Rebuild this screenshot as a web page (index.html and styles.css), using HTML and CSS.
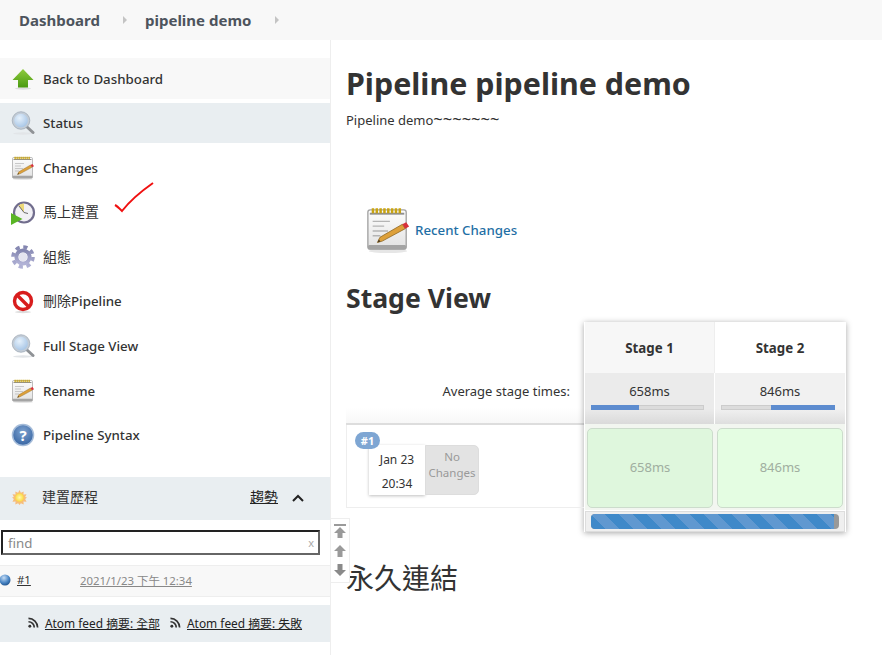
FILE: index.html
```html
<!DOCTYPE html>
<html lang="en">

<head>
    <meta charset="UTF-8">
    <meta name="viewport" content="width=device-width, initial-scale=1.0">
    <title>pipeline demo</title>
    <link rel="stylesheet" href="styles.css">
</head>

<body>
    <svg class="defs" width="0" height="0">
        <defs>
            <radialGradient id="lens" cx="40%" cy="35%" r="70%">
                <stop offset="0" stop-color="#e6f1fb" />
                <stop offset="1" stop-color="#9fc0e4" />
            </radialGradient>
            <linearGradient id="paper" x1="0" y1="0" x2="0" y2="1">
                <stop offset="0" stop-color="#fdfdfd" />
                <stop offset="1" stop-color="#e2e2e2" />
            </linearGradient>
            <linearGradient id="arrow-green" x1="0" y1="0" x2="0" y2="1">
                <stop offset="0" stop-color="#8fcb3e" />
                <stop offset="1" stop-color="#4a9a10" />
            </linearGradient>
            <linearGradient id="gear" x1="0" y1="0" x2="0" y2="1">
                <stop offset="0" stop-color="#8486b0" />
                <stop offset="1" stop-color="#b1b2d6" />
            </linearGradient>
            <radialGradient id="help-blue" cx="50%" cy="35%" r="70%">
                <stop offset="0" stop-color="#7fa3d0" />
                <stop offset="1" stop-color="#31609f" />
            </radialGradient>
            <radialGradient id="ball" cx="40%" cy="30%" r="75%">
                <stop offset="0" stop-color="#c5dcf4" />
                <stop offset=".6" stop-color="#4a86c5" />
                <stop offset="1" stop-color="#1d4f8a" />
            </radialGradient>
            <radialGradient id="sun" cx="50%" cy="50%" r="50%">
                <stop offset="0" stop-color="#fffbb0" />
                <stop offset="1" stop-color="#fbd93f" />
            </radialGradient>
            <symbol id="icon-search" viewBox="0 0 24 24">
                <ellipse cx="12" cy="22.500" rx="10" ry="1.200" fill="#e2e5e8" />
                <path d="M15.500 15.500l6.500 6" stroke="#8f9296" stroke-width="3" stroke-linecap="round" />
                <circle cx="10" cy="9.500" r="7.800" fill="url(#lens)" stroke="#c3ccd6" stroke-width="2" />
                <circle cx="10" cy="9.500" r="8.800" fill="none" stroke="#8e9cab" stroke-width=".6" />
            </symbol>
            <symbol id="icon-notepad" viewBox="0 0 24 24">
                <ellipse cx="12" cy="23" rx="10" ry="1" fill="#e6e6e6" />
                <rect x="1.500" y="1.500" width="20" height="20.500" rx="1.200" fill="url(#paper)" stroke="#a2a2a2" stroke-width=".7" />
                <rect x="1.500" y="19.800" width="20" height="2.400" rx=".8" fill="#a4a4a4" />
                <rect x="2.500" y="3" width="18" height="1" fill="#8f8f8f" />
                <path d="M3.500 2h16" stroke="#c9a411" stroke-width="2.600" stroke-dasharray="1.300 .7" />
                <path d="M4 7.500h9M4 10h6M4 12.500h8M4 15h4" stroke="#b4b4b4" stroke-width=".7" />
                <path d="M6.500 18.500l1.300-2.700L19.500 9l1.500 2.300L9 17.800z" fill="#dda03a" stroke="#8a6420" stroke-width=".4" />
                <path d="M6.500 18.500l.7-1.500.9 1z" fill="#4a3a20" />
                <path d="M19.500 9l2-1 1.500 2.200-2 1.100z" fill="#d8303a" />
            </symbol>
        </defs>
    </svg>

    <header class="breadcrumbs">
        <a href="#">Dashboard</a>
        <span class="crumb-arrow"></span>
        <a href="#">pipeline demo</a>
        <span class="crumb-arrow crumb-arrow-last"></span>
    </header>

    <div class="page">
        <aside class="sidebar">
            <ul class="tasks">
                <li class="task task-back">
                    <svg class="task-icon" viewBox="0 0 24 24">
                        <ellipse cx="12" cy="21.500" rx="8" ry="1.200" fill="#ddd" />
                        <path d="M12 2L22.500 13H17V20.500H7V13H1.500z" fill="url(#arrow-green)" />
                    </svg>
                    <a href="#">Back to Dashboard</a>
                </li>
                <li class="task task-active">
                    <svg class="task-icon"><use href="#icon-search" /></svg>
                    <a href="#">Status</a>
                </li>
                <li class="task">
                    <svg class="task-icon"><use href="#icon-notepad" /></svg>
                    <a href="#">Changes</a>
                </li>
                <li class="task">
                    <svg class="task-icon" viewBox="0 0 24 24">
                        <circle cx="13" cy="11.500" r="10" fill="#f1f0f5" stroke="#716d8d" stroke-width="2.200" />
                        <path d="M13 11.500L7.500 4.500A9 9 0 0 1 13 2.500z" fill="#ecd877" />
                        <path d="M13 11.500L8 5M13 11.500l4 1" stroke="#6a6a6a" stroke-width="1" />
                        <path d="M0 12l11.500 6L0 24z" fill="#59b525" />
                    </svg>
                    <a class="task-link-cjk cjk" href="#">馬上建置</a>
                    <svg class="check-mark" viewBox="0 0 40 34">
                        <path d="M1 23c2 1 4 3 7 6C15 20 29 8 39 1" fill="none" stroke="#f01010" stroke-width="2" />
                    </svg>
                </li>
                <li class="task">
                    <svg class="task-icon" viewBox="0 0 24 24">
                        <circle cx="12" cy="12" r="10" fill="none" stroke="url(#gear)" stroke-width="3.600" stroke-dasharray="4.200 3.650" />
                        <circle cx="12" cy="12" r="6.600" fill="none" stroke="url(#gear)" stroke-width="4" />
                        <circle cx="12" cy="12" r="4.200" fill="#e4e4ef" />
                    </svg>
                    <a class="task-link-cjk cjk" href="#">組態</a>
                </li>
                <li class="task">
                    <svg class="task-icon" viewBox="0 0 24 24">
                        <ellipse cx="12" cy="22" rx="8" ry="1.200" fill="#ddd" />
                        <circle cx="12" cy="11" r="8.500" fill="#fff" stroke="#d81d1d" stroke-width="3.400" />
                        <path d="M6 5l12 12" stroke="#d81d1d" stroke-width="3.400" />
                    </svg>
                    <a class="task-link-cjk" href="#"><span class="cjk">刪除</span>Pipeline</a>
                </li>
                <li class="task">
                    <svg class="task-icon"><use href="#icon-search" /></svg>
                    <a href="#">Full Stage View</a>
                </li>
                <li class="task">
                    <svg class="task-icon"><use href="#icon-notepad" /></svg>
                    <a href="#">Rename</a>
                </li>
                <li class="task">
                    <svg class="task-icon" viewBox="0 0 24 24">
                        <circle cx="12" cy="12" r="10.500" fill="url(#help-blue)" stroke="#a5bcd9" stroke-width="1.500" />
                        <text class="help-mark" x="12" y="17.500" text-anchor="middle">?</text>
                    </svg>
                    <a href="#">Pipeline Syntax</a>
                </li>
            </ul>

            <section class="history">
                <div class="history-head">
                    <svg class="sun-icon" viewBox="0 0 16 16">
                        <path d="M8 0l1.500 3 3-1.500-.3 3.300 3.300-.3L14 7.500l2 .5-2 1.500 1.500 3-3.300-.3.3 3.300-3-1.500L8 16l-1.500-2-3 1.500.3-3.300-3.300.3L2 9.500 0 8l2-.5L.500 4.500l3.300.3-.3-3.300 3 1.500z" fill="#f7bd7a" />
                        <circle cx="8" cy="8" r="4.600" fill="url(#sun)" />
                    </svg>
                    <span class="history-title">建置歷程</span>
                    <a class="trend" href="#">趨勢</a>
                    <svg class="collapse" viewBox="0 0 12 8">
                        <path d="M1 7l5-5 5 5" fill="none" stroke="#222" stroke-width="2" />
                    </svg>
                </div>
                <div class="find-wrap">
                    <div class="find-box">
                        <span>find</span>
                        <span class="find-clear">x</span>
                    </div>
                </div>
                <div class="build-row">
                    <svg class="ball" viewBox="0 0 12 12"><circle cx="6" cy="6" r="5.500" fill="url(#ball)" /></svg>
                    <a class="build-no" href="#">#1</a>
                    <a class="build-date" href="#">2021/1/23 下午 12:34</a>
                </div>
                <div class="feeds">
                    <svg class="rss" viewBox="0 0 12 12">
                        <circle cx="2" cy="10" r="1.600" fill="#333" />
                        <path d="M.500 5.200a6.300 6.300 0 0 1 6.300 6.300M.500 1.500a10 10 0 0 1 10 10" fill="none" stroke="#333" stroke-width="1.800" />
                    </svg>
                    <a href="#">Atom feed 摘要: 全部</a>
                    <svg class="rss rss-second" viewBox="0 0 12 12">
                        <circle cx="2" cy="10" r="1.600" fill="#333" />
                        <path d="M.500 5.200a6.300 6.300 0 0 1 6.300 6.300M.500 1.500a10 10 0 0 1 10 10" fill="none" stroke="#333" stroke-width="1.800" />
                    </svg>
                    <a href="#">Atom feed 摘要: 失敗</a>
                </div>
            </section>
        </aside>

        <main class="content">
            <h1>Pipeline pipeline demo</h1>
            <p class="description">Pipeline demo<span class="tildes">~~~~~~~</span></p>

            <div class="recent">
                <svg class="recent-icon"><use href="#icon-notepad" /></svg>
                <a href="#">Recent Changes</a>
            </div>

            <h2 class="stage-title">Stage View</h2>

            <div class="stage-view">
                <div class="stage-left">
                    <div class="avg-label">Average stage times:</div>
                    <div class="run-row">
                        <span class="run-badge">#1</span>
                        <div class="run-date">
                            <span>Jan 23</span>
                            <span>20:34</span>
                        </div>
                        <div class="run-changes">No Changes</div>
                    </div>
                </div>
                <div class="stage-card">
                    <div class="stage-col stage-col-odd">
                        <div class="stage-name">Stage 1</div>
                        <div class="stage-avg">
                            <span>658ms</span>
                            <div class="avg-track"><div class="avg-fill" style="width: 43%"></div></div>
                        </div>
                        <div class="stage-cell-wrap">
                            <div class="stage-cell">658ms</div>
                        </div>
                    </div>
                    <div class="stage-col">
                        <div class="stage-name">Stage 2</div>
                        <div class="stage-avg">
                            <span>846ms</span>
                            <div class="avg-track"><div class="avg-fill avg-fill-right" style="width: 57%"></div></div>
                        </div>
                        <div class="stage-cell-wrap">
                            <div class="stage-cell stage-cell-light">846ms</div>
                        </div>
                    </div>
                    <div class="progress-row">
                        <div class="progress-bar"><div class="progress-fill"></div></div>
                    </div>
                </div>
            </div>

            <h2 class="permalinks">永久連結</h2>
        </main>
    </div>

    <div class="scroll-btns">
        <svg viewBox="0 0 12 14"><path d="M0 0h12v2H0zM6 3l6 6H8.500v5h-5V9H0z" fill="#9a9a9a" /></svg>
        <svg viewBox="0 0 12 12"><path d="M6 0l6 6H8.500v6h-5V6H0z" fill="#9a9a9a" /></svg>
        <svg viewBox="0 0 12 12"><path d="M6 12l6-6H8.500V0h-5v6H0z" fill="#8a8a8a" /></svg>
    </div>
</body>

</html>
```

FILE: styles.css
```css
* {
    box-sizing: border-box;
}

html,
body {
    height: 655px;
    overflow: hidden;
}

body {
    position: relative;
    margin: 0;
    font-family: "Noto Sans", "Noto Sans CJK TC", sans-serif;
    font-size: 13px;
    color: #333;
    background-color: #fff;
}

a {
    color: inherit;
    text-decoration: none;
}

.defs {
    position: absolute;
}

.cjk {
    font-size: 14px;
    font-weight: 400;
}

.breadcrumbs {
    display: flex;
    align-items: center;
    height: 40px;
    padding-left: 19px;
    background-color: #f8f8f8;
    font-size: 15px;
    font-weight: 700;
    color: #4d545d;
}

.crumb-arrow {
    width: 0;
    height: 0;
    margin: 0 18px 0 23px;
    border-left: 4px solid #c4c4c4;
    border-top: 4px solid transparent;
    border-bottom: 4px solid transparent;
}

.crumb-arrow-last {
    margin-left: 24px;
}

.page {
    display: flex;
    height: 615px;
}

.sidebar {
    flex: none;
    width: 331px;
    padding-top: 18px;
    border-right: 1px solid #eee;
}

.tasks {
    margin: 0;
    padding: 0;
    list-style: none;
}

.task {
    position: relative;
    display: flex;
    align-items: center;
    height: 44.500px;
    padding-left: 11px;
    font-size: 13.300px;
    font-weight: 500;
    color: #333;
}

.task-back {
    height: 41px;
    margin-bottom: 4px;
    background-color: #f8f8f8;
}

.task-active {
    height: 40px;
    margin-bottom: 3px;
    background-color: #e9eef1;
}

.task-icon {
    flex: none;
    width: 24px;
    height: 24px;
    margin-right: 8px;
    overflow: visible;
}

.task-link-cjk {
    margin-bottom: 3px;
}

.help-mark {
    font-size: 15px;
    font-weight: 700;
    fill: #fff;
}

.check-mark {
    position: absolute;
    left: 114px;
    top: -9px;
    width: 40px;
    height: 34px;
}

.history {
    margin-top: 19px;
}

.history-head {
    display: flex;
    align-items: center;
    height: 43px;
    padding: 0 0 5px 12px;
    background-color: #e9eef1;
    font-size: 14px;
}

.sun-icon {
    width: 15px;
    height: 15px;
    margin: 4px 15px 0 0;
}

.history-title {
    flex: 1;
    color: #333;
}

.trend {
    color: #222;
    text-decoration: underline;
}

.collapse {
    width: 12px;
    height: 8px;
    margin: 5px 26px 0 14px;
}

.find-wrap {
    padding: 10px 10px 10px 1px;
}

.find-box {
    display: flex;
    justify-content: space-between;
    align-items: center;
    height: 25px;
    padding: 1px 4px 0 5px;
    border: 2px solid #222;
    border-right-color: #666;
    border-bottom-color: #666;
    font-size: 13.300px;
    color: #888;
}

.find-clear {
    font-size: 11px;
    color: #aaa;
}

.build-row {
    display: flex;
    align-items: center;
    height: 32px;
    padding-bottom: 2px;
    background-color: #f8f8f8;
    border-top: 1px solid #eee;
    border-bottom: 1px solid #eee;
    font-size: 11.400px;
}

.ball {
    width: 12px;
    height: 12px;
    margin-right: 6px;
    margin-left: -1px;
}

.build-no {
    width: 63px;
    color: #333;
    text-decoration: underline;
}

.build-date {
    color: #888;
    text-decoration: underline;
}

.feeds {
    display: flex;
    align-items: center;
    justify-content: center;
    height: 37px;
    margin-top: 8px;
    padding: 0 0 2px;
    background-color: #e9eef1;
    font-size: 11.900px;
    color: #222;
}

.feeds a {
    text-decoration: underline;
}

.rss {
    width: 11px;
    height: 11px;
    margin-right: 6px;
}

.rss-second {
    margin-left: 10px;
}

.content {
    flex: 1;
    padding: 24px 36px 0 15px;
}

h1 {
    margin: 0;
    font-size: 30.400px;
    line-height: 40px;
    font-weight: 700;
    color: #333;
}

.description {
    margin: 7px 0 0;
    line-height: 18px;
}

.tildes {
    font-size: 16.500px;
    line-height: 1;
}

.recent {
    display: flex;
    align-items: center;
    margin: 78px 0 0 19px;
    color: #1f6fa5;
    font-size: 13.300px;
    font-weight: 500;
}

.recent-icon {
    width: 46px;
    height: 46px;
    margin-right: 4px;
}

.stage-title {
    margin: 28px 0 0;
    font-size: 26.600px;
    line-height: 34px;
    font-weight: 700;
}

.stage-view {
    display: flex;
    margin-top: 7px;
}

.stage-left {
    flex: none;
    width: 238px;
}

.avg-label {
    height: 103px;
    padding: 60px 14px 0 0;
    text-align: right;
    border-bottom: 2px solid #ddd;
    background: linear-gradient(to bottom, #fff 85%, #f7f7f7);
}

.run-row {
    position: relative;
    display: flex;
    height: 83px;
    padding: 20px 0 0 22px;
    border-bottom: 1px solid #eee;
    border-left: 1px solid #eee;
}

.run-badge {
    position: absolute;
    left: 8px;
    top: 7px;
    width: 25px;
    height: 17px;
    border-radius: 9px;
    background-color: #7ea6d3;
    color: #fff;
    font-size: 11px;
    font-weight: 700;
    line-height: 17px;
    text-align: center;
}

.run-date {
    display: flex;
    flex-direction: column;
    justify-content: space-around;
    align-items: center;
    width: 56px;
    height: 50px;
    padding-top: 2px;
    background-color: #fff;
    box-shadow: 0 1px 3px rgba(0, 0, 0, 0.25);
    font-size: 12px;
    color: #333;
}

.run-changes {
    width: 54px;
    height: 50px;
    padding: 3px 2px;
    background-color: #e3e3e3;
    border-radius: 0 5px 5px 0;
    border: 1px solid #ddd;
    color: #999;
    font-size: 11.500px;
    line-height: 16px;
    text-align: center;
}

.stage-card {
    display: grid;
    grid-template-columns: 130px 130px;
    width: 262px;
    height: 210px;
    padding: 0 1px;
    background-color: #fff;
    box-shadow: 0 1px 6px rgba(0, 0, 0, 0.35);
}

.stage-col {
    display: flex;
    flex-direction: column;
    background-color: #fff;
}

.stage-name {
    height: 51px;
    padding-top: 1px;
    line-height: 51px;
    text-align: center;
    font-size: 13.300px;
    font-weight: 700;
    color: #333;
    background-color: #fff;
}

.stage-col-odd .stage-name {
    background-color: #f7f7f7;
    border-right: 1px solid #eee;
}

.stage-avg {
    height: 51px;
    padding-top: 9px;
    text-align: center;
    background: linear-gradient(to bottom, #f1f1f1 70%, #dedede);
    line-height: 18px;
}

.stage-col-odd .stage-avg {
    background: linear-gradient(to bottom, #ebebeb 70%, #dadada);
    border-right: 1px solid #fff;
}

.avg-track {
    display: flex;
    height: 5px;
    margin: 5px 10px 0 6px;
    background-color: #dcdcdc;
    border: 1px solid #ccc;
}

.avg-fill {
    height: 5px;
    margin: -1px 0 0 -1px;
    background-color: #5d8ccf;
}

.avg-fill-right {
    margin: -1px -1px 0 auto;
}

.stage-cell-wrap {
    height: 86px;
    padding: 4px 2px 2px;
    background-color: #f2f6f0;
}

.stage-cell {
    display: flex;
    align-items: center;
    justify-content: center;
    height: 80px;
    padding-bottom: 2px;
    border: 1px solid #ccdccc;
    border-radius: 5px;
    background-color: #dff7dd;
    color: #a0aea0;
}

.stage-cell-light {
    background-color: #e4fde2;
}

.progress-row {
    grid-column: 1 / 3;
    height: 21px;
    padding: 2px 5px;
    background-color: #efefef;
    border: 1px solid #ddd;
}

.progress-bar {
    height: 15px;
    border-radius: 4px;
    overflow: hidden;
    background-color: #999;
}

.progress-fill {
    height: 15px;
    width: 243px;
    background: repeating-linear-gradient(45deg, #3f89c9 0 10px, #6098d0 10px 20px);
}

.permalinks {
    margin: 28px 0 0;
    font-size: 28px;
    line-height: 36px;
    font-weight: 400;
}

.scroll-btns {
    position: absolute;
    left: 331px;
    top: 518px;
    display: flex;
    flex-direction: column;
    align-items: center;
    gap: 7px;
    width: 19px;
    height: 65px;
    padding-top: 5px;
    background-color: #fff;
    border: 1px solid #eee;
    border-left: none;
}

.scroll-btns svg {
    width: 12px;
    flex: none;
}
```
